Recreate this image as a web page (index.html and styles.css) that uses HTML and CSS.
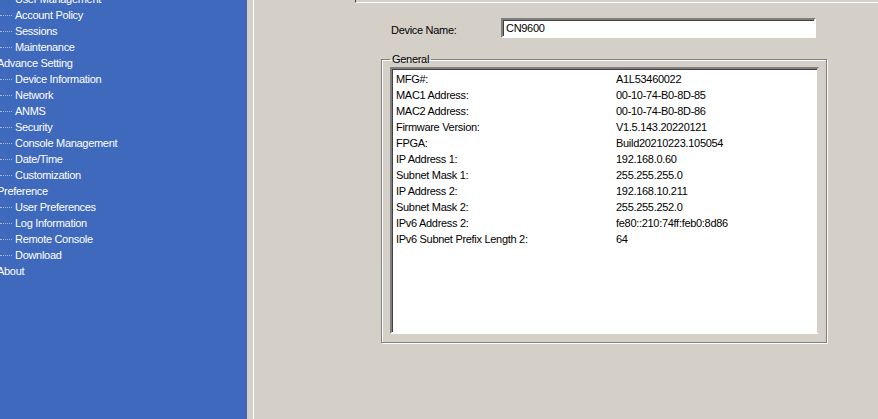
FILE: index.html
```html
<!DOCTYPE html>
<html>
<head>
<meta charset="utf-8">
<link rel="stylesheet" href="styles.css">
</head>
<body>
<div class="app">
  <nav class="sidebar">
    <ul class="tree">
      <li class="child">User Management</li>
      <li class="child">Account Policy</li>
      <li class="child">Sessions</li>
      <li class="child">Maintenance</li>
      <li class="parent">Advance Setting</li>
      <li class="child">Device Information</li>
      <li class="child">Network</li>
      <li class="child">ANMS</li>
      <li class="child">Security</li>
      <li class="child">Console Management</li>
      <li class="child">Date/Time</li>
      <li class="child">Customization</li>
      <li class="parent">Preference</li>
      <li class="child">User Preferences</li>
      <li class="child">Log Information</li>
      <li class="child">Remote Console</li>
      <li class="child">Download</li>
      <li class="parent">About</li>
    </ul>
  </nav>
  <div class="splitter"></div>
  <main class="main">
    <div class="tabline"></div>
    <div class="content">
      <div class="name-row">
        <label class="name-label">Device Name:</label>
        <div class="textbox">CN9600</div>
      </div>
      <fieldset class="group">
        <legend class="legend">General</legend>
        <div class="listbox">
          <div class="row"><span class="key">MFG#:</span><span class="val">A1L53460022</span></div>
          <div class="row"><span class="key">MAC1 Address:</span><span class="val">00-10-74-B0-8D-85</span></div>
          <div class="row"><span class="key">MAC2 Address:</span><span class="val">00-10-74-B0-8D-86</span></div>
          <div class="row"><span class="key">Firmware Version:</span><span class="val">V1.5.143.20220121</span></div>
          <div class="row"><span class="key">FPGA:</span><span class="val">Build20210223.105054</span></div>
          <div class="row"><span class="key">IP Address 1:</span><span class="val">192.168.0.60</span></div>
          <div class="row"><span class="key">Subnet Mask 1:</span><span class="val">255.255.255.0</span></div>
          <div class="row"><span class="key">IP Address 2:</span><span class="val">192.168.10.211</span></div>
          <div class="row"><span class="key">Subnet Mask 2:</span><span class="val">255.255.252.0</span></div>
          <div class="row"><span class="key">IPv6 Address 2:</span><span class="val">fe80::210:74ff:feb0:8d86</span></div>
          <div class="row"><span class="key">IPv6 Subnet Prefix Length 2:</span><span class="val">64</span></div>
        </div>
      </fieldset>
    </div>
  </main>
</div>
</body>
</html>
```
FILE: styles.css
```css
html, body {
  margin: 0;
  padding: 0;
  width: 878px;
  height: 419px;
  overflow: hidden;
  background: #d4d0c8;
  font-family: "Liberation Sans", Arial, sans-serif;
  font-size: 11px;
  letter-spacing: -0.3px;
  color: #000;
}

.app {
  display: flex;
  width: 878px;
  height: 419px;
}

.sidebar {
  width: 247px;
  flex: none;
  background: #3f69bd;
  color: #fff;
  overflow: hidden;
}

.tree {
  list-style: none;
  margin: -9px 0 0 0;
  padding: 0;
}

.tree li {
  height: 16px;
  line-height: 16px;
  white-space: nowrap;
  position: relative;
}

.child {
  padding-left: 15px;
}

.child::before {
  content: "";
  position: absolute;
  left: 0;
  top: 8px;
  width: 12px;
  border-top: 1px dotted #a8b8d8;
}

.parent {
  text-indent: -3px;
}

.splitter {
  width: 6px;
  flex: none;
  background: #d4d0c8;
  border-right: 1px solid #ffffff;
}

.main {
  flex: 1;
  display: flex;
  flex-direction: column;
}

.tabline {
  height: 2px;
  margin-left: 101px;
  border-bottom: 1px solid #ffffff;
  border-left: 1px solid #404040;
}

.content {
  padding: 14px 0 0 127px;
  display: flex;
  flex-direction: column;
}

.name-row {
  display: flex;
  align-items: center;
  height: 22px;
}

.name-label {
  width: 110px;
  padding-left: 10px;
  padding-top: 3px;
}

.textbox {
  width: 305px;
  height: 16px;
  line-height: 16px;
  background: #fff;
  border-top: 2px solid #808080;
  border-left: 2px solid #808080;
  border-bottom: 2px solid #ffffff;
  border-right: 2px solid #ffffff;
  box-shadow: inset 1px 1px 0 #404040;
  padding: 0 3px;
}

.group {
  margin: 14px 0 0 0;
  width: 429px;
  padding: 1px 7px 8px 8px;
  border: 1px solid #808080;
  box-shadow: 1px 1px 0 #ffffff, inset 1px 1px 0 #ffffff;
}

.legend {
  padding: 0 2px;
  margin-left: 0;
  line-height: 13px;
}

.listbox {
  height: 261px;
  background: #fff;
  border-top: 2px solid #808080;
  border-left: 2px solid #808080;
  border-bottom: 2px solid #ffffff;
  border-right: 2px solid #d4d0c8;
  box-shadow: inset 1px 1px 0 #404040;
  padding: 2px 0 0 4px;
}

.row {
  display: flex;
  height: 16px;
  line-height: 16px;
}

.key {
  width: 220px;
  flex: none;
}
```
